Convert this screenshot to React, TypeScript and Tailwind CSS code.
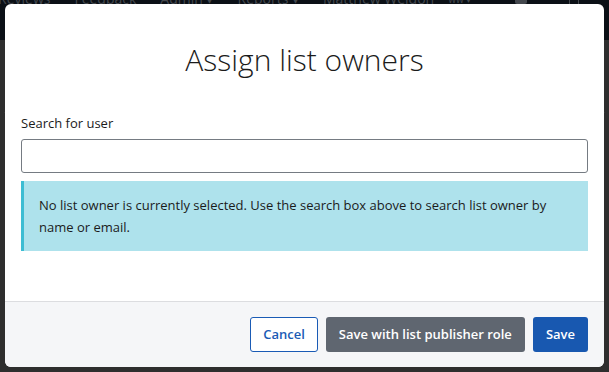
const navItems = ["Reviews", "Feedback", "Admin ▾", "Reports ▾", "Matthew Weldon"];

const AssignOwnersModal = () => {
  return (
    <div className="absolute left-[5px] top-[4px] flex h-[363px] w-[599px] flex-col overflow-hidden rounded-[6px] bg-white">
      <div className="flex h-[110px] items-start justify-center pt-[38px]">
        <h2 className="text-[30px] font-light leading-[36px] text-[#1b1b1b]">Assign list owners</h2>
      </div>

      <div className="flex-1 px-4">
        <label className="block text-[13px] leading-[18px] text-[#1b1b1b]">Search for user</label>
        <input
          type="text"
          className="mt-[7px] block h-[34px] w-full rounded-[3px] border border-[#757b82] bg-white px-3 text-[13px] outline-none"
        />
        <div className="mt-[8px] border-l-[3px] border-[#3dbdd3] bg-[#aee2ec] px-[15px] py-[13px]">
          <p className="text-[13px] leading-[22px] text-[#1b1b1b]">
            No list owner is currently selected. Use the search box above to search list owner by name or email.
          </p>
        </div>
      </div>

      <div className="flex h-[66px] items-center justify-end gap-2 border-t border-[#dcdde0] bg-[#f5f6f8] px-4">
        <button className="h-[35px] rounded-[3px] border border-[#1a5bb5] bg-white px-[12px] text-[13px] font-semibold text-[#1a5bb5]">
          Cancel
        </button>
        <button className="h-[35px] rounded-[3px] bg-[#5f6670] px-[13px] text-[13px] font-semibold text-white">
          Save with list publisher role
        </button>
        <button className="h-[35px] rounded-[3px] bg-[#1858b0] px-[13px] text-[13px] font-semibold text-white">
          Save
        </button>
      </div>
    </div>
  );
};

export default function App() {
  return (
    <div
      className="relative h-[372px] w-[609px] overflow-hidden bg-[#2e2e2e]"
      style={{ fontFamily: '"Open Sans", "Noto Sans", sans-serif' }}
    >
      <div className="flex h-[40px] items-start bg-[#0b1016] text-[14px] leading-[14px] text-[#44484e]">
        <div className="-ml-[2px] -mt-[8px] flex items-center gap-[24px]">
          {navItems.map((item) => (
            <span key={item}>{item}</span>
          ))}
          <span className="-ml-[10px] text-[10px]">ww ▾</span>
          <span className="ml-[20px] inline-block h-[10px] w-[12px] rounded-[2px] bg-[#44484e]" />
          <span className="ml-[18px] inline-block h-[12px] w-[10px] border border-[#44484e]" />
        </div>
      </div>
      <div className="px-1 pt-4 text-[#4a4a4a]">
        <div className="text-[32px] leading-[40px]">i</div>
        <div className="mt-4 border-b border-[#3a3a3a]" />
      </div>
      <AssignOwnersModal />
    </div>
  );
}
